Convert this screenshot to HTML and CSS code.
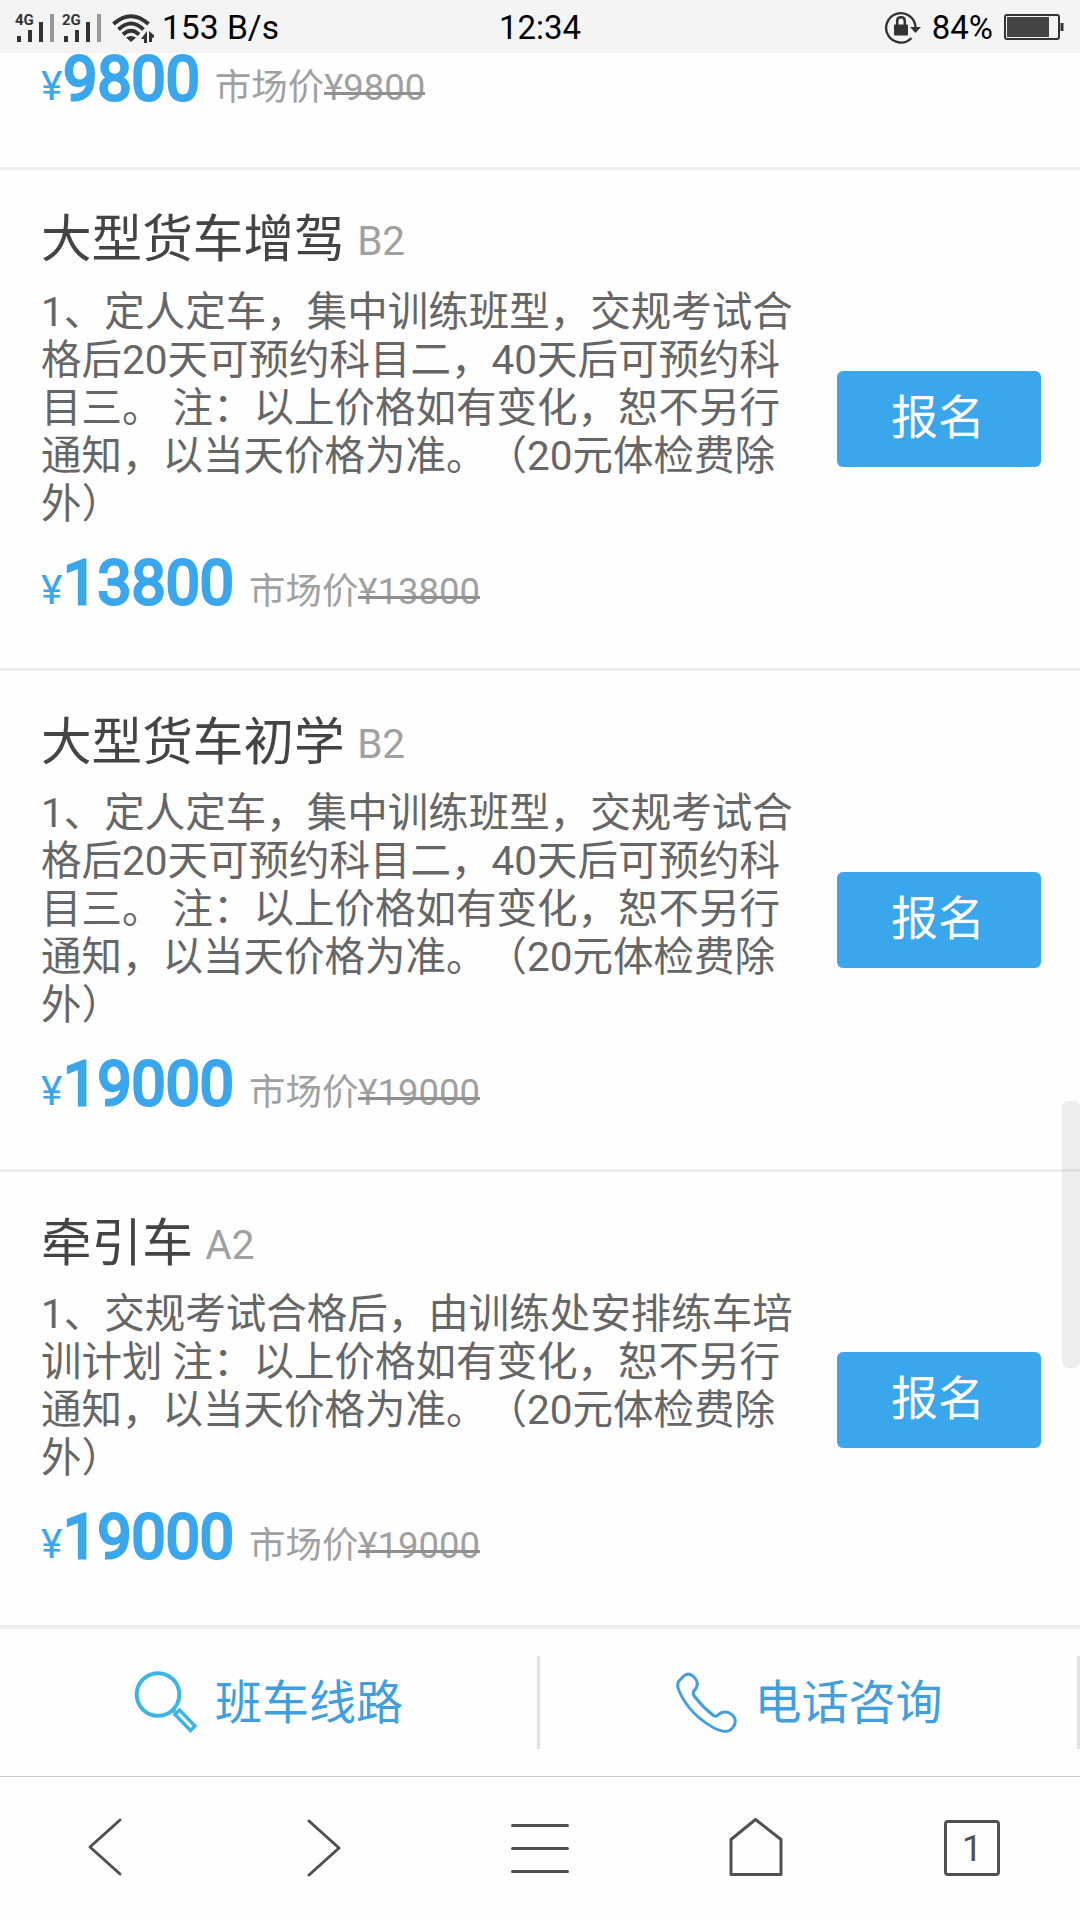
FILE: index.html
```html
<!DOCTYPE html>
<html lang="zh-CN">
<head>
<meta charset="utf-8">
<title>班型价格</title>
<link rel="stylesheet" href="styles.css">
</head>
<body>
<div class="screen">
  <header class="status">
    <div class="status-left">
      <svg class="signals" width="154" height="53" viewBox="0 0 154 53">
        <g fill="#333">
          <text class="net" x="15" y="24">4G</text>
          <text class="net" x="62" y="24">2G</text>
          <rect x="17" y="35" width="4" height="6"/><rect x="28" y="29" width="4" height="12"/><rect x="39" y="21" width="4" height="20"/>
          <rect x="64" y="35" width="4" height="6"/><rect x="75" y="29" width="4" height="12"/><rect x="86" y="21" width="4" height="20"/>
          <path d="M126 36.500Q131 33.500 136 36.500L131 41Z"/>
          <path d="M147 30V42H144V38H141ZM149 30L156 36L152 37V41H149Z"/>
        </g>
        <g fill="#999"><rect x="50" y="13" width="4" height="28"/><rect x="97" y="13" width="4" height="28"/></g>
        <g fill="none" stroke="#333" stroke-width="4">
          <path d="M113.500 23Q131 7.500 148.500 23"/><path d="M118.500 28.500Q131 16.500 143.500 28.500"/><path d="M123 33.500Q131 26 139 33.500"/>
        </g>
      </svg>
      <span class="speed">153 B/s</span>
    </div>
    <span class="clock">12:34</span>
    <div class="status-right">
      <svg width="38" height="36" viewBox="0 0 38 36">
        <path d="M27.500 29A14.700 14.700 0 1 1 31.500 18" fill="none" stroke="#333" stroke-width="2.400"/>
        <path d="M26 18H37L31.500 24Z" fill="#333"/>
        <rect x="10" y="15.500" width="14" height="11" rx="1" fill="#333"/>
        <path d="M13.200 17V12Q13.200 8.200 17 8.200T20.800 12V17" fill="none" stroke="#333" stroke-width="2.600"/>
      </svg>
      <span class="percent">84%</span>
      <svg width="62" height="28" viewBox="0 0 62 28">
        <rect x="1" y="2" width="54" height="24" rx="2" fill="none" stroke="#333" stroke-width="2"/>
        <rect x="3" y="4" width="42" height="20" fill="#444"/>
        <rect x="56.500" y="10" width="3" height="8" fill="#333"/>
      </svg>
    </div>
  </header>

  <main class="list">
    <article class="course course-first">
      <div class="info">
        <p class="prices"><span class="yen">¥</span><b class="amount">9800</b><span class="market">市场价<del>¥9800</del></span></p>
      </div>
    </article>
    <article class="course">
      <div class="info">
        <h2 class="name">大型货车增驾 <small>B2</small></h2>
        <p class="desc">1、定人定车，集中训练班型，交规考试合格后20天可预约科目二，40天后可预约科目三。 注：以上价格如有变化，恕不另行通知，以当天价格为准。（20元体检费除外）</p>
        <p class="prices"><span class="yen">¥</span><b class="amount">13800</b><span class="market">市场价<del>¥13800</del></span></p>
      </div>
      <button class="apply">报名</button>
    </article>
    <article class="course">
      <div class="info">
        <h2 class="name">大型货车初学 <small>B2</small></h2>
        <p class="desc">1、定人定车，集中训练班型，交规考试合格后20天可预约科目二，40天后可预约科目三。 注：以上价格如有变化，恕不另行通知，以当天价格为准。（20元体检费除外）</p>
        <p class="prices"><span class="yen">¥</span><b class="amount">19000</b><span class="market">市场价<del>¥19000</del></span></p>
      </div>
      <button class="apply">报名</button>
    </article>
    <article class="course course-last">
      <div class="info">
        <h2 class="name">牵引车 <small>A2</small></h2>
        <p class="desc">1、交规考试合格后，由训练处安排练车培训计划 注：以上价格如有变化，恕不另行通知，以当天价格为准。（20元体检费除外）</p>
        <p class="prices"><span class="yen">¥</span><b class="amount">19000</b><span class="market">市场价<del>¥19000</del></span></p>
      </div>
      <button class="apply">报名</button>
    </article>
  </main>

  <footer class="actions">
    <a class="action action-route">
      <svg width="66" height="66" viewBox="0 0 66 66" fill="none" stroke="#3bb5e6" stroke-width="4">
        <circle cx="25" cy="24.500" r="21.300"/>
        <path d="M39 39L42 42" />
        <path d="M42 44.500L46.500 40L62 56L57.500 60.500Z" stroke-width="3.400"/>
      </svg>
      <span>班车线路</span>
    </a>
    <a class="action action-phone">
      <svg width="66" height="66" viewBox="0 0 66 66" fill="none" stroke="#459fdf" stroke-width="3" stroke-linejoin="round">
        <path d="M4.500 11.500L10 5.800Q14.500 2.200 19.500 6.500Q25 11.500 22.500 17.500L19.500 21.500Q18.500 24 21 27Q29 37.500 39.500 45.500Q41.500 47 43.500 45.500Q48 40.500 54.500 42.500Q63 47 61 53.500Q59.500 58 55.500 60.500Q50 63 41 58.500Q16 45 5.500 22Q2.500 15 4.500 11.500Z"/>
      </svg>
      <span>电话咨询</span>
    </a>
  </footer>

  <nav class="browser-bar">
    <a><svg width="60" height="60" viewBox="0 0 60 60"><path d="M42 3L12 30L42 57"/></svg></a>
    <a><svg width="60" height="60" viewBox="0 0 60 60"><path d="M15 4L45 31L15 58"/></svg></a>
    <a><svg width="60" height="60" viewBox="0 0 60 60"><path d="M2.500 8.500H57.500M2.500 31.500H57.500M2.500 54.500H57.500"/></svg></a>
    <a><svg width="60" height="60" viewBox="0 0 60 60"><path d="M5 22.500L29.500 2.500L55 22.500V57.500H5Z"/></svg></a>
    <a><span class="tabs">1</span></a>
  </nav>
  <div class="scrollbar"></div>
</div>
</body>
</html>
```
FILE: styles.css
```css
* { box-sizing: border-box; margin: 0; padding: 0; }
body {
  font-family: Roboto, "Noto Sans CJK SC", sans-serif;
  background: #fefefe;
  text-spacing-trim: space-all;
}
.screen {
  position: relative;
  display: flex;
  flex-direction: column;
  width: 1080px;
  height: 1920px;
  overflow: hidden;
}

.status {
  flex: none;
  display: grid;
  grid-template-columns: 1fr auto 1fr;
  align-items: center;
  height: 53px;
  background: #f4f4f4;
  color: #000;
  font-size: 33px;
  line-height: 53px;
}
.status-left, .status-right { display: flex; align-items: center; }
.status-left { gap: 8px; }
.status-right { justify-content: flex-end; padding-right: 14px; }
.percent { margin: 0 11px 0 10px; }
.clock { padding-top: 1px; }
.speed { font-size: 33.6px; }
.net { font: 700 15px Roboto, sans-serif; }

.list { flex: 1; min-height: 0; }
.course {
  display: flex;
  align-items: center;
  justify-content: space-between;
  height: 501px;
  padding: 0 39px 0 41px;
  border-bottom: 3px solid #eee;
}
.course-first { height: 117px; }
.course-last { height: 456px; border-bottom: 0; }
.info { align-self: flex-start; width: 755px; padding-top: 42px; }
.course-first .info { padding-top: 0; margin-top: -9px; }
.name { font-size: 50.6px; line-height: 60px; font-weight: 400; color: #444; }
.name small { font-size: 40.5px; vertical-align: 2px; line-height: 1; color: #a0a0a0; }
.course-first + .course .name { margin: -2px 0 18px; }
.desc { margin: 16px 0 20px; font-size: 40.5px; line-height: 48px; color: #666; }
.prices { height: 70px; line-height: 70px; font-size: 64px; white-space: nowrap; }
.yen { font-size: 40.5px; color: #3aa7ed; }
.amount {
  margin-left: 1px;
  font-size: 60.75px;
  font-weight: 400;
  color: #3aa7ed;
  -webkit-text-stroke: 3px #3aa7ed;
}
.market { margin-left: 15px; font-size: 36.45px; color: #a0a0a0; }
.market del { position: relative; text-decoration: none; }
.market del::after {
  content: "";
  position: absolute;
  left: 0;
  right: 0;
  bottom: 14px;
  height: 3px;
  background: #8f8f8f;
}
.apply {
  width: 204px;
  height: 96px;
  padding: 0 2px 11px 0;
  border: 0;
  border-radius: 6px;
  background: #3aa7ed;
  color: #fff;
  font-family: inherit;
  font-size: 47px;
}

.actions {
  flex: none;
  display: flex;
  align-items: center;
  height: 151px;
  border-top: 4px solid #eee;
}
.action {
  flex: 1;
  display: flex;
  align-items: center;
  height: 93px;
  border-right: 3px solid #e2e2e2;
  color: #429fde;
  font-size: 47px;
  line-height: 60px;
}
.action-route { padding-left: 133px; gap: 16px; }
.action-phone { padding-left: 134px; gap: 15px; }

.browser-bar {
  flex: none;
  display: grid;
  grid-template-columns: repeat(5, 1fr);
  height: 144px;
  border-top: 1px solid #ccc;
}
.browser-bar a { display: flex; justify-content: center; padding-top: 40px; }
.browser-bar path { fill: none; stroke: #505050; stroke-width: 3; stroke-linejoin: round; stroke-linecap: round; }
.tabs {
  width: 56px;
  height: 56px;
  margin-top: 3px;
  border: 3px solid #505050;
  border-radius: 4px;
  color: #505050;
  font-size: 36px;
  line-height: 52px;
  text-align: center;
}
.scrollbar {
  position: absolute;
  right: 0;
  top: 1101px;
  width: 18px;
  height: 267px;
  border-radius: 6px;
  background: rgba(0, 0, 0, .065);
}
```
